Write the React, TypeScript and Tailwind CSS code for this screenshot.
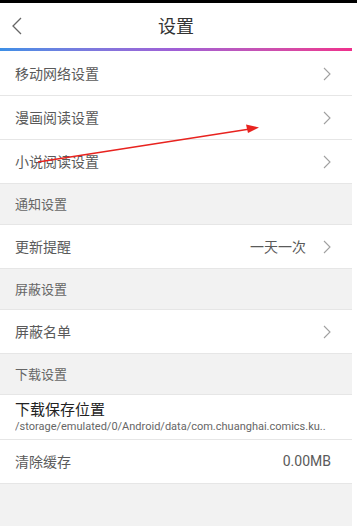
import React from "react";

const FONT = { fontFamily: '"Noto Sans CJK SC", "Noto Sans", sans-serif' };

function Chevron() {
  return (
    <svg width="8" height="14" viewBox="0 0 8 14" className="shrink-0">
      <path d="M1 1 L7 7 L1 13" fill="none" stroke="#a0a0a0" strokeWidth="1.1" />
    </svg>
  );
}

function Row({ label, value, arrow = true }: { label: string; value?: string; arrow?: boolean }) {
  return (
    <div className="flex h-[44px] items-center justify-between bg-white pl-[15px] pr-[21px] border-b border-[#e6e6e6]">
      <span className="text-[14px] text-[#5a5a5a]">{label}</span>
      <div className="flex items-center gap-[17px]">
        {value && <span className="text-[14px] text-[#5a5a5a]">{value}</span>}
        {arrow && <Chevron />}
      </div>
    </div>
  );
}

function Section({ label }: { label: string }) {
  return (
    <div className="flex h-[41px] items-center bg-[#f2f2f2] pl-[15px] border-b border-[#e6e6e6]">
      <span className="text-[13px] text-[#666]">{label}</span>
    </div>
  );
}

export default function App() {
  return (
    <div className="relative h-[526px] w-[357px] overflow-hidden bg-white" style={FONT}>
      <div className="h-[3px] w-full bg-black" />
      <div className="flex h-[526px] w-[352px] flex-col bg-[#f2f2f2]">
        {/* 标题栏 */}
        <div className="relative flex h-[45px] items-center justify-center bg-white">
          <svg width="10" height="18" viewBox="0 0 10 18" className="absolute left-[12px] top-[14px]">
            <path d="M9 1 L1 9 L9 17" fill="none" stroke="#666" strokeWidth="1.3" />
          </svg>
          <span className="text-[18px] text-[#333]">设置</span>
        </div>
        <div className="h-[3px] w-full bg-gradient-to-r from-[#3b8fe6] via-[#a05fd6] to-[#ef2f8c]" />
        <div className="h-[1px] bg-white" />

        <Row label="移动网络设置" />
        <Row label="漫画阅读设置" />
        <Row label="小说阅读设置" />
        <Section label="通知设置" />
        <Row label="更新提醒" value="一天一次" />
        <Section label="屏蔽设置" />
        <Row label="屏蔽名单" />
        <Section label="下载设置" />
        <div className="flex h-[45px] flex-col justify-center bg-white pl-[15px] pr-[4px] border-b border-[#e6e6e6]">
          <span className="text-[15px] leading-[20px] text-[#222]">下载保存位置</span>
          <span
            className="truncate text-[11px] leading-[16px] text-[#666]"
            style={{ fontFamily: 'Roboto, "Noto Sans", sans-serif' }}
          >
            /storage/emulated/0/Android/data/com.chuanghai.comics.ku..
          </span>
        </div>
        <div className="flex h-[44px] items-center justify-between bg-white pl-[15px] pr-[21px] border-b border-[#e6e6e6]">
          <span className="text-[14px] text-[#5a5a5a]">清除缓存</span>
          <span className="text-[14px] text-[#5a5a5a]" style={{ fontFamily: 'Roboto, sans-serif' }}>0.00MB</span>
        </div>
      </div>

      {/* 红色标注箭头 */}
      <svg className="pointer-events-none absolute left-0 top-0" width="357" height="526">
        <line x1="38" y1="162" x2="250" y2="129" stroke="#e8231f" strokeWidth="1.5" />
        <polygon points="259,127.5 246,124.5 248,133" fill="#e8231f" />
      </svg>
    </div>
  );
}
